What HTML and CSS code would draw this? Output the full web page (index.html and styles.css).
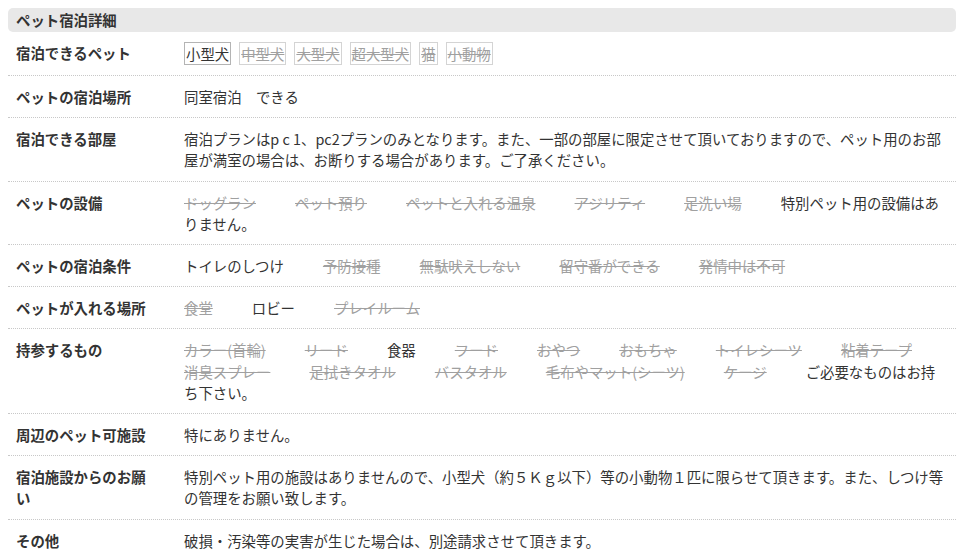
FILE: index.html
```html
<!DOCTYPE html>
<html lang="ja">
<head>
    <meta charset="UTF-8">
    <meta name="viewport" content="width=device-width, initial-scale=1.0">
    <title>ペット宿泊詳細</title>
    <link rel="stylesheet" href="styles.css">
</head>
<body>
    <div class="detail">
        <h2 class="detail-title">ペット宿泊詳細</h2>
        <dl class="detail-list">
            <div class="row">
                <dt>宿泊できるペット</dt>
                <dd><span class="tag">小型犬</span><span class="tag off">中型犬</span><span class="tag off">大型犬</span><span class="tag off">超大型犬</span><span class="tag off">猫</span><span class="tag off">小動物</span></dd>
            </div>
            <div class="row">
                <dt>ペットの宿泊場所</dt>
                <dd>同室宿泊　できる</dd>
            </div>
            <div class="row">
                <dt>宿泊できる部屋</dt>
                <dd>宿泊プランはp c 1、pc2プランのみとなります。また、一部の部屋に限定させて頂いておりますので、ペット用のお部屋が満室の場合は、お断りする場合があります。ご了承ください。</dd>
            </div>
            <div class="row">
                <dt>ペットの設備</dt>
                <dd class="items">
                    <span class="item off">ドッグラン</span>
                    <span class="item off">ペット預り</span>
                    <span class="item off">ペットと入れる温泉</span>
                    <span class="item off">アジリティ</span>
                    <span class="item off">足洗い場</span>
                    特別ペット用の設備はありません。
                </dd>
            </div>
            <div class="row">
                <dt>ペットの宿泊条件</dt>
                <dd class="items">
                    <span class="item">トイレのしつけ</span>
                    <span class="item off">予防接種</span>
                    <span class="item off">無駄吠えしない</span>
                    <span class="item off">留守番ができる</span>
                    <span class="item off">発情中は不可</span>
                </dd>
            </div>
            <div class="row">
                <dt>ペットが入れる場所</dt>
                <dd class="items">
                    <span class="item off">食堂</span>
                    <span class="item">ロビー</span>
                    <span class="item off">プレイルーム</span>
                </dd>
            </div>
            <div class="row">
                <dt>持参するもの</dt>
                <dd class="items">
                    <span class="item off">カラー(首輪)</span>
                    <span class="item off">リード</span>
                    <span class="item">食器</span>
                    <span class="item off">フード</span>
                    <span class="item off">おやつ</span>
                    <span class="item off">おもちゃ</span>
                    <span class="item off">トイレシーツ</span>
                    <span class="item off">粘着テープ</span>
                    <span class="item off">消臭スプレー</span>
                    <span class="item off">足拭きタオル</span>
                    <span class="item off">バスタオル</span>
                    <span class="item off">毛布やマット(シーツ)</span>
                    <span class="item off">ケージ</span>
                    ご必要なものはお持ち下さい。
                </dd>
            </div>
            <div class="row">
                <dt>周辺のペット可施設</dt>
                <dd>特にありません。</dd>
            </div>
            <div class="row">
                <dt>宿泊施設からのお願い</dt>
                <dd>特別ペット用の施設はありませんので、小型犬（約５Ｋｇ以下）等の小動物１匹に限らせて頂きます。また、しつけ等の管理をお願い致します。</dd>
            </div>
            <div class="row">
                <dt>その他</dt>
                <dd>破損・汚染等の実害が生じた場合は、別途請求させて頂きます。</dd>
            </div>
        </dl>
    </div>
</body>
</html>
```

FILE: styles.css
```css
body {
    margin: 8px;
    font-family: "Noto Sans CJK JP", "Noto Sans", sans-serif;
    font-size: 14.4px;
    line-height: 21.2px;
    color: #333;
    background: #fff;
}
.detail-title {
    margin: 0;
    padding: 0 8px;
    height: 24px;
    line-height: 24px;
    font-size: 14.4px;
    font-weight: bold;
    background: #e8e8e8;
    border-radius: 5px;
}
.detail-list {
    margin: 0;
}
.row {
    display: grid;
    grid-template-columns: 176px 1fr;
    border-bottom: 1px dotted #c8c8c8;
}
.row dt {
    padding: 10px 32px 10px 8px;
    font-weight: bold;
}
.row dd {
    margin: 0;
    padding: 10px 8px 10px 0;
}
/* 項目の間隔は空白で取る（行末では消える） */
.items {
    word-spacing: 35.8px;
}
.item {
    display: inline-block;
    word-spacing: normal;
}
.tag {
    display: inline-block;
    vertical-align: top;
    line-height: 21px;
    padding: 0 1px;
    margin-right: 8px;
    border: 1px solid #b4b4b4;
}
.off {
    color: #a0a0a0;
    text-decoration: line-through;
}
.tag.off {
    border-color: #d4d4d4;
}
```
